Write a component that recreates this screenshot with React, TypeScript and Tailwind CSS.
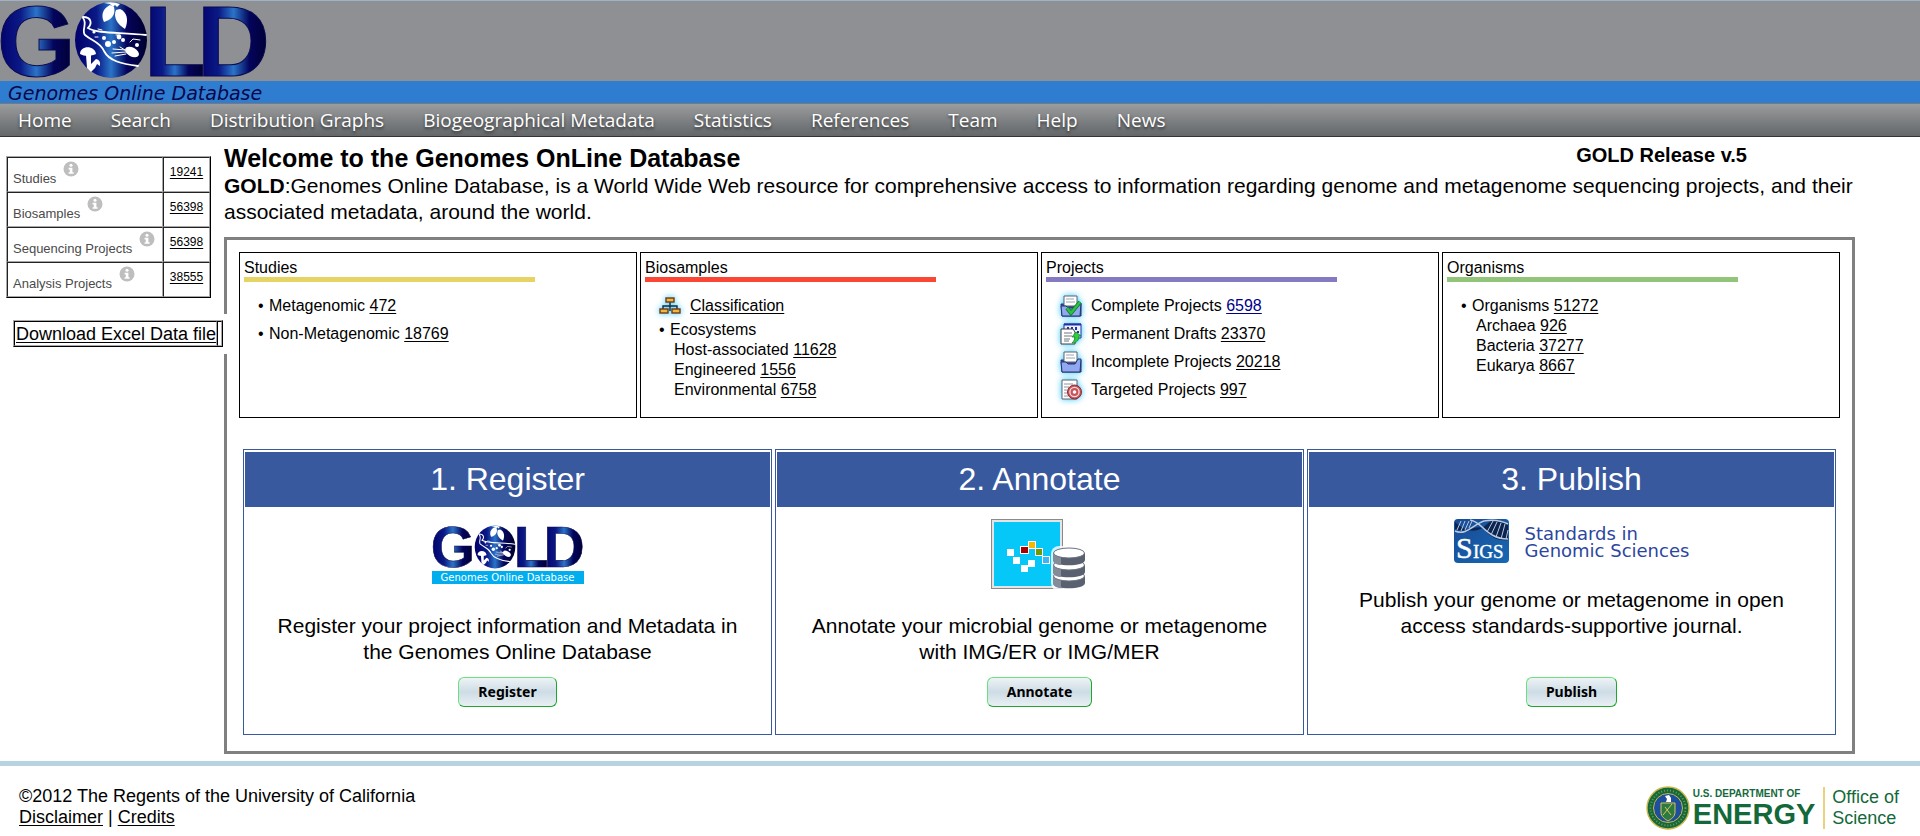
import { clsx } from "clsx";
import React from "react";

const navLinks = [
  "Home",
  "Search",
  "Distribution Graphs",
  "Biogeographical Metadata",
  "Statistics",
  "References",
  "Team",
  "Help",
  "News",
];

const totals = [
  { label: "Studies", count: "19241" },
  { label: "Biosamples", count: "56398" },
  { label: "Sequencing Projects", count: "56398" },
  { label: "Analysis Projects", count: "38555" },
];

const GoldLetters: React.FC<{ id: string; className: string }> = ({
  id,
  className,
}) => {
  const letter = {
    fontFamily: "Liberation Sans, Arial, sans-serif",
    fontWeight: 700,
    fontSize: 101,
    fill: `url(#${id})`,
    stroke: "#0a0a50",
    strokeWidth: 1,
  };

  return (
    <svg
      viewBox="0 2 268 78"
      className={clsx("overflow-visible", className)}
      aria-label="GOLD"
    >
      <defs>
        <linearGradient id={id}>
          <stop offset="0.05" stopColor="#03036e" />
          <stop offset="0.3" stopColor="#0b1a86" />
          <stop offset="0.5" stopColor="#2a74c8" />
          <stop offset="0.72" stopColor="#04045c" />
          <stop offset="1" stopColor="#00002e" />
        </linearGradient>
      </defs>
      <text x="-3" y="77" {...letter}>G</text>
      <text x="144" y="77" {...letter}>L</text>
      <text x="197" y="77" {...letter}>D</text>
      <ellipse cx="111" cy="41" rx="36" ry="38" fill={`url(#${id})`} />
      <g fill="#fff">
        <path d="M104 4 Q112 2 120 5 L117 8 L115 6 L113 8 L110 5Z" />
        <path d="M110 6 C102 10 101 17 104 23 C111 21 116 16 114 8Z" />
        <path d="M116 11 C113 18 117 25 125 30 C129 21 127 13 120 10Z" />
        <path d="M80 55 C80 46 95 46 96 55 C92 57 85 58 80 55Z" />
        <path d="M86 56 L91 56 L91 65 L96 60 Q101 61 100 67 L97 65 L95 69 L91 73 L87 69Z" />
        <ellipse cx="132" cy="53" rx="7.5" ry="4.5" transform="rotate(28 132 53)" />
        <circle cx="94" cy="33" r="1.6" />
        <circle cx="104" cy="39" r="2" />
        <circle cx="108" cy="45" r="3" />
        <circle cx="114" cy="43" r="2" />
        <circle cx="119" cy="38" r="2.4" />
        <circle cx="123" cy="41" r="2" />
        <circle cx="137" cy="46" r="2" />
      </g>
      <g fill="none" stroke="#fff" strokeLinecap="round">
        <path d="M83 18 C92 18 92 25 88 29 C98 35 120 33 146 36" strokeWidth="1.8" />
        <path d="M83 19 C88 25 81 31 85 36 C92 42 100 43 104 52 C109 62 122 65 138 67" strokeWidth="1.8" />
        <path d="M125 51 L113 50 M126 53 L112 54 M126 55 L115 57 M120 48 L125 51" strokeWidth="1" />
        <path d="M95 38 L98 38 M98 30 L102 31 M130 43 L133 40 L140 41 M116 36 L120 36" strokeWidth="1" />
      </g>
    </svg>
  );
};

const InfoIcon = () => (
  <svg viewBox="0 0 16 16" className="h-4 w-4">
    <circle cx="8" cy="8" r="7.5" fill="#bebebe" />
    <circle cx="8" cy="4.2" r="1.5" fill="#fff" />
    <path d="M5.6 6.8h3.8v4.4h1.2v1.6H5.6v-1.6h1.2V8.4H5.6Z" fill="#fff" />
  </svg>
);

const TreeIcon = () => (
  <svg
    viewBox="0 0 22 20"
    className="h-5 w-[22px] drop-shadow-[0_0_3px_#2cc8ff]"
  >
    <path d="M11 6v9M4 14v-4h14v4" fill="none" stroke="#1d2a38" strokeWidth="1.4" />
    <g fill="#f2b63c" stroke="#6b3b17" strokeWidth="1.4">
      <rect x="7" y="2" width="8" height="4" />
      <rect x="1" y="13" width="8" height="4" />
      <rect x="13" y="13" width="8" height="4" />
    </g>
  </svg>
);

const Folder = () => (
  <>
    <path d="M1 9h20v12H2Z" fill="#3c4c9c" stroke="#27336f" />
    <path d="M4 1h13v10H4Z" fill="#fff" stroke="#5b6470" />
    <path d="M6 4h8M6 7h9" stroke="#9aa3ad" />
    <path d="M1 11h5l2 2h7l3-5h3l-1 13H2Z" fill="#8fa8ef" stroke="#27336f" />
  </>
);

const ProjectIcon: React.FC<{ kind: string }> = ({ kind }) => (
  <svg
    viewBox="0 0 22 22"
    className="h-[22px] w-[22px] drop-shadow-[0_0_3px_#2cc8ff]"
  >
    {kind === "complete" && (
      <>
        <Folder />
        <path d="m7 13 4 5 9-11" fill="none" stroke="#0c7a26" strokeWidth="4" />
        <path d="m7 13 4 5 9-11" fill="none" stroke="#2fbf4a" strokeWidth="2.4" />
      </>
    )}
    {kind === "draft" && (
      <>
        <path d="M4 1h17v14H4Z" fill="#eef2ff" stroke="#2430a8" />
        <path d="M4 1.5h17M8 4v2M12 4v2M16 4v3M18 8v2" stroke="#2430a8" strokeWidth="2" />
        <path d="M1 6h12l2 3v12H1Z" fill="#fff" stroke="#3a3f45" />
        <path d="M4 10h8M4 13h8M4 16h6M4 18h5" stroke="#6e757c" />
        <path d="M12 20c5 0 7-3 7-7h2l-5-4-4 5h3c0 2-1 4-3 6Z" fill="#2fcf3f" stroke="#0c7a26" strokeWidth="0.7" />
      </>
    )}
    {kind === "incomplete" && <Folder />}
    {kind === "target" && (
      <>
        <path d="M2 1h15v19H2Z" fill="#fff" stroke="#5b6470" />
        <path d="M4 5h9M4 8h5M4 11h3M4 14h3M4 17h4" stroke="#8c949c" />
        <circle cx="14.5" cy="13" r="7" fill="#c9545a" stroke="#8c2a30" />
        <circle cx="14.5" cy="13" r="4.6" fill="none" stroke="#f6dede" strokeWidth="1.3" />
        <circle cx="14.5" cy="13" r="1.8" fill="#fff" />
      </>
    )}
  </svg>
);

const Count: React.FC<{ children: string; className?: string }> = ({
  children,
  className,
}) => (
  <a href="#" className={clsx("underline underline-offset-2", className)}>
    {children}
  </a>
);

const StatBox: React.FC<{
  title: string;
  bar: string;
  children: React.ReactNode;
}> = ({ title, bar, children }) => (
  <section className="min-h-[166px] border border-black px-1 pt-[6px]">
    <h2 className="leading-[18px]">{title}</h2>
    <div className={clsx("h-[5px] w-3/4", bar)} />
    <ul className="mt-[10px] pl-[14px] leading-5">{children}</ul>
  </section>
);

const Bullet: React.FC<{ children: React.ReactNode; className: string }> = ({
  children,
  className,
}) => (
  <li className={clsx("flex items-center", className)}>
    <span className="w-[11px]">•</span>
    <span>{children}</span>
  </li>
);

const ActionCard: React.FC<{
  title: string;
  logo: React.ReactNode;
  logoClass: string;
  text: string;
  button: string;
}> = ({ title, logo, logoClass, text, button }) => (
  <section className="flex min-h-[286px] flex-col border border-[#39599f] px-[1px] py-[2px]">
    <h2 className="bg-[#39599f] text-center text-[32px] leading-[55px] text-white">
      {title}
    </h2>
    <div className="flex grow flex-col items-center px-6 pt-3 pb-[25px]">
      <div className={clsx("flex", logoClass)}>{logo}</div>
      <p className="max-w-[480px] text-center text-[21px] leading-[26px]">
        {text}
      </p>
      <button
        type="button"
        className="mt-auto h-[30px] rounded-md border border-t-[#6be07c] border-r-[#1fa62c] border-b-[#1fa62c] border-l-[#6be07c] bg-linear-to-b from-[#eef3f6] via-[#cddce5] to-[#e9f0f4] px-[19px] font-['Noto_Sans',sans-serif] text-sm font-bold"
      >
        {button}
      </button>
    </div>
  </section>
);

const GoldSmall = () => (
  <div className="w-[152px] pt-[6px]">
    <GoldLetters id="gold-small" className="h-11 w-[152px]" />
    <div className="mt-[2px] bg-[#00aeef] text-center font-['DejaVu_Sans',sans-serif] text-[10px] leading-[13px] text-white">
      Genomes Online Database
    </div>
  </div>
);

const ImgLogo = () => (
  <svg viewBox="0 0 98 72" className="h-[72px] w-[98px]">
    <rect x="0.5" y="0.5" width="71" height="69" fill="#e4e4e4" stroke="#8b8b8b" />
    <rect x="3" y="3" width="66" height="64" fill="#05c8f8" />
    <g fill="#fff">
      <rect x="16" y="30" width="7" height="7" />
      <rect x="22" y="38" width="7" height="7" />
      <rect x="30" y="46" width="7" height="7" />
      <rect x="37" y="41" width="7" height="7" />
    </g>
    <g stroke="#fff">
      <rect x="29.5" y="27.5" width="8" height="7" fill="#a80000" />
      <rect x="37.5" y="22.5" width="7" height="7" fill="#f5b800" />
      <rect x="44.5" y="29.5" width="7" height="7" fill="#6f9a00" />
      <rect x="51.5" y="37.5" width="7" height="7" fill="#3cb4f5" />
    </g>
    <rect x="60" y="27" width="36" height="45" rx="8" fill="#fff" opacity="0.8" />
    {[57, 46, 34].map((y) => (
      <g key={y}>
        <path d={`M62 ${y}v7c0 7 32 7 32 0v-7Z`} fill="#59606f" />
        <path d={`M62 ${y}v7c0 3 4 5 8 5v-12Z`} fill="#858c99" />
        <ellipse cx="78" cy={y} rx="15.5" ry="5" fill="#fff" stroke="#6a7180" />
      </g>
    ))}
  </svg>
);

const SigsLogo = () => (
  <>
    <svg viewBox="0 0 55 44" className="mr-4 h-11 w-[55px]">
      <defs>
        <linearGradient id="sigs" x1="0" y1="0" x2="1" y2="1">
          <stop offset="0" stopColor="#1a4a94" />
          <stop offset="1" stopColor="#1668b4" />
        </linearGradient>
      </defs>
      <rect width="55" height="44" rx="4" fill="url(#sigs)" />
      <path d="M1 3C12 14 24 14 32 6C40 -2 48 2 54 5V21C46 22 38 20 31 11C24 3 12 16 1 10Z" fill="#0c2450" />
      <g fill="none" stroke="#b9c9de">
        <path d="M1 12C12 17 20 5 30 2C40 0 48 2 54 5" strokeWidth="1.6" />
        <path d="M16 1C28 2 32 20 54 20" strokeWidth="1.6" />
        <path d="M3 11 7 2M7 12l4-10M11 11l4-9M15 9l3-7M33 13l6-11M37 16l6-13M42 18l5-14M47 20l4-15M52 20l2-9" />
      </g>
      <g
        fill="#fff"
        stroke="#fff"
        strokeWidth="0.4"
        fontFamily="Liberation Serif, Times New Roman, serif"
      >
        <text x="2" y="39" fontSize="30">S</text>
        <text x="19" y="39" fontSize="19">IGS</text>
      </g>
    </svg>
    <div className="pt-[6px] font-['DejaVu_Sans',sans-serif] text-[18px] leading-[17px] whitespace-nowrap text-[#2c46a0]">
      Standards in
      <br />
      Genomic Sciences
    </div>
  </>
);

const DoeSeal = () => (
  <svg viewBox="0 0 44 44" className="h-11 w-11">
    <circle cx="22" cy="22" r="21" fill="#15683a" stroke="#c9b74a" strokeWidth="1.4" />
    <circle cx="22" cy="22" r="17.5" fill="none" stroke="#6f9a50" strokeWidth="2" strokeDasharray="1 2" />
    <circle cx="22" cy="22" r="14.5" fill="#1e4f9c" stroke="#c9b74a" />
    <path d="M15 17h14v9c0 5-4 7-7 9-3-2-7-4-7-9Z" fill="#2c7a3f" stroke="#d8c65a" />
    <path d="m17 29 9-11M19 21l6 8" stroke="#d8c65a" />
    <path d="M19 10l4-1 2 3v4h-5l1-3Z" fill="#fff" />
  </svg>
);

const App: React.FC = () => {
  return (
    <div className="font-['Liberation_Sans',Arial,sans-serif] text-base text-black">
      <header>
        <div className="h-[81px] border-t border-[#9db2c6] bg-[#8f9094]">
          <GoldLetters id="gold-main" className="h-[78px] w-[268px]" />
        </div>
        <div className="h-[22px] bg-[#2f7dd0] pl-2 font-['DejaVu_Sans',sans-serif] text-[19px] leading-6 text-[#07074c] italic">
          Genomes Online Database
        </div>
        <nav className="flex h-[34px] items-center gap-[39px] border-t border-b border-t-[#77797b] border-b-[#343437] bg-linear-to-b from-[#9b9c9e] to-[#636769] pl-[18px] font-['Open_Sans',sans-serif] text-[19px] text-white">
          {navLinks.map((link) => (
            <a key={link} href="#" className="text-shadow-[0_2px_3px_#333]">
              {link}
            </a>
          ))}
        </nav>
      </header>

      <div className="flex">
        <aside className="w-[224px] shrink-0 pt-[19px]">
          <table className="ml-[6px] w-[205px] border-separate border-spacing-0 border border-t-[#a8a8a8] border-r-black border-b-black border-l-[#a8a8a8]">
            <tbody>
              {totals.map(({ label, count }) => (
                <tr key={label} className="h-[35px]">
                  <th
                    scope="row"
                    className="border border-t-[#222] border-r-[#a8a8a8] border-b-[#a8a8a8] border-l-[#222] pl-[5px] text-left text-[13px] font-normal text-[#4a4a4a]"
                  >
                    <span className="flex items-start gap-[7px]">
                      <span className="pt-2">{label}</span>
                      <InfoIcon />
                    </span>
                  </th>
                  <td className="w-[47px] border border-t-[#222] border-r-[#a8a8a8] border-b-[#a8a8a8] border-l-[#222] pb-[6px] text-center text-xs">
                    <Count>{count}</Count>
                  </td>
                </tr>
              ))}
            </tbody>
          </table>
          {/* wider than the column, so it runs over the panel's left edge */}
          <div className="relative mt-4 w-[228px] bg-white pt-[6px] pb-[7px] pl-[13px]">
            <div className="flex h-[27px] w-[210px] border border-t-[#a8a8a8] border-r-black border-b-black border-l-[#a8a8a8]">
              <a
                href="#"
                className="grow border border-t-black border-r-[#a8a8a8] border-b-[#a8a8a8] border-l-black pl-[1px] text-[18px] leading-6 whitespace-nowrap underline underline-offset-2"
              >
                Download Excel Data file
              </a>
              <span className="w-[5px] border border-t-black border-r-[#a8a8a8] border-b-[#a8a8a8] border-l-black" />
            </div>
          </div>
        </aside>

        <main className="mr-[65px] grow">
          <div className="flex justify-between pt-[6px] pr-[108px] font-bold">
            <h1 className="text-[25px] leading-[30px]">
              Welcome to the Genomes OnLine Database
            </h1>
            <p className="text-xl leading-6">GOLD Release v.5</p>
          </div>
          <p className="text-[21px] leading-[26px]">
            <b>GOLD</b>:Genomes Online Database, is a World Wide Web resource
            for comprehensive access to information regarding genome and
            metagenome sequencing projects, and their associated metadata,
            around the world.
          </p>

          <div className="mt-3 border-[3px] border-[#808080] px-3 pt-3 pb-4">
            <div className="grid grid-cols-4 gap-[3px]">
              <StatBox title="Studies" bar="bg-[#e5d464]">
                <Bullet className="h-7">
                  Metagenomic <Count>472</Count>
                </Bullet>
                <Bullet className="h-7">
                  Non-Metagenomic <Count>18769</Count>
                </Bullet>
              </StatBox>
              <StatBox title="Biosamples" bar="bg-[#fa4632]">
                <li className="flex h-7 items-center gap-[9px]">
                  <TreeIcon />
                  <Count>Classification</Count>
                </li>
                <Bullet className="h-5">Ecosystems</Bullet>
                <li className="pl-[15px]">
                  Host-associated <Count>11628</Count>
                </li>
                <li className="pl-[15px]">
                  Engineered <Count>1556</Count>
                </li>
                <li className="pl-[15px]">
                  Environmental <Count>6758</Count>
                </li>
              </StatBox>
              <StatBox title="Projects" bar="bg-[#837ac2]">
                <li className="flex h-7 items-center gap-[9px]">
                  <ProjectIcon kind="complete" />
                  <span>
                    Complete Projects{" "}
                    <Count className="text-[#00008b]">6598</Count>
                  </span>
                </li>
                <li className="flex h-7 items-center gap-[9px]">
                  <ProjectIcon kind="draft" />
                  <span>
                    Permanent Drafts <Count>23370</Count>
                  </span>
                </li>
                <li className="flex h-7 items-center gap-[9px]">
                  <ProjectIcon kind="incomplete" />
                  <span>
                    Incomplete Projects <Count>20218</Count>
                  </span>
                </li>
                <li className="flex h-7 items-center gap-[9px]">
                  <ProjectIcon kind="target" />
                  <span>
                    Targeted Projects <Count>997</Count>
                  </span>
                </li>
              </StatBox>
              <StatBox title="Organisms" bar="bg-[#92c47a]">
                <Bullet className="pt-1">
                  Organisms <Count>51272</Count>
                </Bullet>
                <li className="pl-[15px]">
                  Archaea <Count>926</Count>
                </li>
                <li className="pl-[15px]">
                  Bacteria <Count>37277</Count>
                </li>
                <li className="pl-[15px]">
                  Eukarya <Count>8667</Count>
                </li>
              </StatBox>
            </div>

            <div className="mt-[31px] grid grid-cols-3 gap-[3px] px-1">
              <ActionCard
                title="1. Register"
                logo={<GoldSmall />}
                logoClass="h-[94px]"
                text="Register your project information and Metadata in the Genomes Online Database"
                button="Register"
              />
              <ActionCard
                title="2. Annotate"
                logo={<ImgLogo />}
                logoClass="h-[94px]"
                text="Annotate your microbial genome or metagenome with IMG/ER or IMG/MER"
                button="Annotate"
              />
              <ActionCard
                title="3. Publish"
                logo={<SigsLogo />}
                logoClass="h-[68px]"
                text="Publish your genome or metagenome in open access standards-supportive journal."
                button="Publish"
              />
            </div>
          </div>
        </main>
      </div>

      <footer className="mt-[7px] flex justify-between border-t-[5px] border-[#b5d3e0] pt-5 pr-[21px] pb-[6px] pl-[19px]">
        <div className="text-[18px] leading-[21px]">
          <p>©2012 The Regents of the University of California</p>
          <p>
            <Count>Disclaimer</Count> | <Count>Credits</Count>
          </p>
        </div>
        <div className="flex items-center text-[#14693a]">
          <DoeSeal />
          <div className="ml-[3px] font-bold">
            <p className="text-[10px] leading-3">U.S. DEPARTMENT OF</p>
            <p className="text-[29px] leading-7">ENERGY</p>
          </div>
          <div className="ml-2 border-l-2 border-[#ead27a] pl-[7px] text-[18px] leading-[21px]">
            Office of
            <br />
            Science
          </div>
        </div>
      </footer>
    </div>
  );
};

export default App;
